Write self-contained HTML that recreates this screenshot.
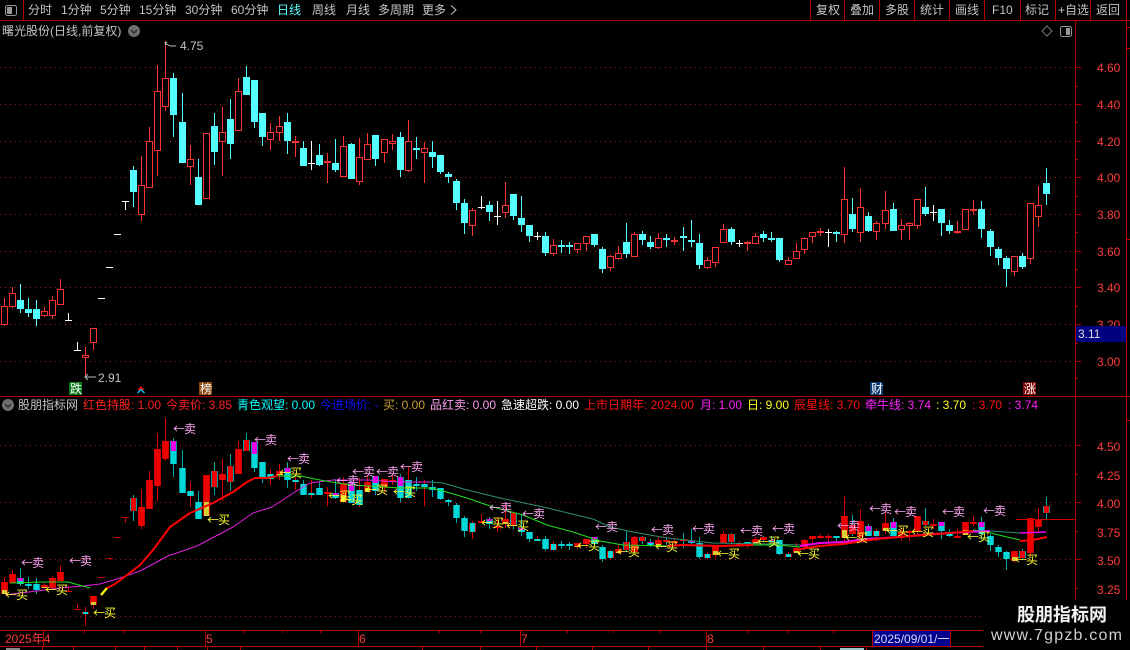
<!DOCTYPE html>
<html><head><meta charset="utf-8">
<style>
html,body{margin:0;padding:0;background:#000;width:1130px;height:650px;overflow:hidden}
svg{display:block;position:absolute;left:0;top:0}
text{font-family:"Liberation Sans","WenQuanYi Zen Hei","Noto Sans CJK SC",sans-serif;font-size:12px}
.t{fill:#c4c4c4}
.p{fill:#ff3c3c}
.s{fill:#ffa4f4;font-family:"WenQuanYi Zen Hei","Noto Sans CJK SC",sans-serif;letter-spacing:-1px}
.b{fill:#ffff33;font-family:"WenQuanYi Zen Hei","Noto Sans CJK SC",sans-serif;letter-spacing:-1px}
</style></head>
<body>
<svg width="1130" height="650" viewBox="0 0 1130 650" shape-rendering="crispEdges">
<g stroke="#a81818" stroke-dasharray="1 4" stroke-width="1">
<path d="M0 67.5H1075M0 104.5H1075M0 141.5H1075M0 177.5H1075M0 214.5H1075M0 251.5H1075M0 287.5H1075M0 324.5H1075M0 361.5H1075M0 445.5H1075M0 502.5H1075M0 559.5H1075M0 616.5H1075"/>
</g>
<g id="top"></g>
<g id="low"></g>
<g fill="none" shape-rendering="auto" stroke-linejoin="round">
<polyline stroke="#e020e0" points="5,595 20,593 37,591 60,588 83,586 100,584 117,579 140,571 168,556 197,546 233,527 253,513 272,507 298,490 310,483 333,480 367,480 400,482 430,482"/>
<polyline stroke="#2f8f6f" points="430,482 443,483 467,490 500,498 543,507 593,519 610,527 633,532 667,538 713,543 767,544 800,545"/>
<polyline stroke="#2f8f6f" points="990,531 1020,533"/>
<polyline stroke="#20e020" points="10,583 43,582 68,582 90,588"/>
<polyline stroke="#20e020" points="278,476 300,476 320,480 337,483 353,485 400,488 430,488 443,491 467,498 493,507 523,515 547,525 573,532 600,541 623,545 667,546"/>
<polyline stroke="#20e020" points="753,545 777,545 800,547"/>
<polyline stroke="#20e020" points="973,530 987,532 1007,537 1020,540"/>
<polyline stroke="#f000f0" stroke-width="2" points="800,546 820,543 843,542 867,539 900,537 933,534 967,532 990,531"/>
<polyline stroke="#f000f0" stroke-width="1.5" points="1020,533 1046,532"/>
<polyline stroke="#ff0000" stroke-width="2" points="667,546 683,545 720,546 753,545"/>
<polyline stroke="#ff0000" stroke-width="2" points="800,549 820,546 843,544 877,539 910,536 950,533 973,531"/>
<polyline stroke="#ff0000" stroke-width="2" points="1020,541 1033,540 1047,537"/>
<polyline stroke="#ff0000" stroke-width="2" points="107,588 115,584 127,575 140,565 153,550 170,527 190,513 213,503 233,492 247,482 255,478 267,478 278,476"/>
<polyline stroke="#ffee00" stroke-width="2.4" points="101,595 107,588"/>
</g>
<g fill="#b40000">
<rect x="0" y="20" width="1130" height="1"/>
<rect x="23" y="0" width="1" height="20"/>
<rect x="810" y="0" width="1" height="20"/><rect x="844" y="0" width="1" height="20"/><rect x="879" y="0" width="1" height="20"/><rect x="914" y="0" width="1" height="20"/><rect x="949" y="0" width="1" height="20"/><rect x="984" y="0" width="1" height="20"/><rect x="1020" y="0" width="1" height="20"/><rect x="1055" y="0" width="1" height="20"/><rect x="1090" y="0" width="1" height="20"/><rect x="1126" y="0" width="1" height="20"/>
<rect x="1075" y="20" width="1" height="610"/>
<rect x="1126" y="20" width="1" height="610"/>
<rect x="0" y="396" width="1130" height="1"/>
<rect x="0" y="630" width="1130" height="1"/>
<rect x="0" y="646" width="1130" height="1"/>
<rect x="1126" y="27" width="4" height="1"/><rect x="1126" y="48" width="4" height="1"/><rect x="1126" y="239" width="4" height="1"/><rect x="1126" y="420" width="4" height="1"/>
<rect x="43" y="630" width="1" height="16"/><rect x="205" y="630" width="1" height="16"/><rect x="358" y="630" width="1" height="16"/><rect x="520" y="630" width="1" height="16"/><rect x="706" y="630" width="1" height="16"/>
<rect x="84" y="630" width="1" height="3"/><rect x="124" y="630" width="1" height="3"/><rect x="243" y="630" width="1" height="3"/><rect x="282" y="630" width="1" height="3"/><rect x="320" y="630" width="1" height="3"/><rect x="439" y="630" width="1" height="3"/><rect x="480" y="630" width="1" height="3"/><rect x="567" y="630" width="1" height="3"/><rect x="613" y="630" width="1" height="3"/><rect x="660" y="630" width="1" height="3"/><rect x="748" y="630" width="1" height="3"/><rect x="788" y="630" width="1" height="3"/><rect x="833" y="630" width="1" height="3"/>
<rect x="42" y="646" width="1" height="4"/><rect x="73" y="646" width="1" height="4"/><rect x="115" y="646" width="1" height="4"/><rect x="144" y="646" width="1" height="4"/><rect x="177" y="646" width="1" height="4"/><rect x="207" y="646" width="1" height="4"/><rect x="240" y="646" width="1" height="4"/><rect x="422" y="646" width="1" height="4"/><rect x="480" y="646" width="1" height="4"/><rect x="536" y="646" width="1" height="4"/><rect x="592" y="646" width="1" height="4"/><rect x="648" y="646" width="1" height="4"/><rect x="706" y="646" width="1" height="4"/><rect x="763" y="646" width="1" height="4"/><rect x="820" y="646" width="1" height="4"/><rect x="866" y="646" width="1" height="4"/>
<path id="ticks" d=""/>
<rect x="872" y="631" width="78" height="15" fill="#00008c"/>
<rect x="872" y="630" width="1" height="16"/><rect x="950" y="630" width="1" height="16"/>
<rect x="1016" y="519" width="59" height="1" fill="#d00000"/>
<rect x="6" y="648" width="14" height="2" fill="#8a8a8a"/><rect x="840" y="648" width="24" height="2" fill="#9fc8c8"/>
</g>
<g shape-rendering="auto">
<rect x="5.5" y="5.500" width="11" height="10" rx="2" fill="none" stroke="#999"/><rect x="7" y="7" width="5" height="7" fill="#999"/>
<rect x="1060.5" y="26.5" width="11" height="10" rx="2" fill="none" stroke="#999"/><rect x="1066" y="28" width="4" height="7" fill="#999"/>
<path d="M1047 26l5 5-5 5-5-5z" fill="none" stroke="#777"/>
<path d="M451 5.500l5 4.500-5 4.500" fill="none" stroke="#c4c4c4"/>
<circle cx="134" cy="31" r="6" fill="#6e6e6e"/><path d="M131 30l3 3 3-3" fill="none" stroke="#222" stroke-width="1.2"/>
<circle cx="8" cy="405" r="6" fill="#6e6e6e"/><path d="M5 404l3 3 3-3" fill="none" stroke="#222" stroke-width="1.2"/>
<path d="M165 43l5 3h6M167 42l-2 1 1 2" fill="none" stroke="#bbb"/>
<path d="M85 377h11M88 374l-3 3 3 3" fill="none" stroke="#bbb"/>
<path d="M141 386l4 4h-8z" fill="#e00000"/><path d="M137.500 393l3.500-3.500 3.500 3.500" fill="none" stroke="#00b8f0" stroke-width="1.4"/>
</g>
<rect x="69" y="382" width="13" height="13" fill="#0a7a1a"/>
<rect x="199" y="382" width="13" height="13" fill="#8a4a10"/>
<rect x="870" y="382" width="13" height="13" fill="#0a3a6e"/>
<rect x="1023" y="382" width="13" height="13" fill="#800808"/>
<rect x="983" y="600" width="147" height="50" fill="#000"/>
<g id="labels" shape-rendering="auto">
<text class="t" x="28" y="14">分时</text><text class="t" x="61" y="14">1分钟</text><text class="t" x="100" y="14">5分钟</text><text class="t" x="139" y="14">15分钟</text><text class="t" x="185" y="14">30分钟</text><text class="t" x="231" y="14">60分钟</text><text x="277" y="14" fill="#55ffff">日线</text><text class="t" x="312" y="14">周线</text><text class="t" x="346" y="14">月线</text><text class="t" x="378" y="14">多周期</text><text class="t" x="422" y="14">更多</text>
<text class="t" x="816" y="14">复权</text><text class="t" x="850" y="14">叠加</text><text class="t" x="885" y="14">多股</text><text class="t" x="920" y="14">统计</text><text class="t" x="955" y="14">画线</text><text class="t" x="992" y="14">F10</text><text class="t" x="1025" y="14">标记</text><text class="t" x="1058" y="14">+自选</text><text class="t" x="1096" y="14">返回</text>
<text class="t" x="2" y="35">曙光股份(日线,前复权)</text>
<text class="t" x="180" y="50">4.75</text><text class="t" x="98" y="382">2.91</text>
<text x="70" y="393" fill="#fff">跌</text><text x="200" y="393" fill="#fff">榜</text><text x="871" y="393" fill="#fff">财</text><text x="1024" y="393" fill="#fff">涨</text>
<text class="p" x="1097" y="72">4.60</text><text class="p" x="1097" y="109">4.40</text><text class="p" x="1097" y="146">4.20</text><text class="p" x="1097" y="182">4.00</text><text class="p" x="1097" y="219">3.80</text><text class="p" x="1097" y="256">3.60</text><text class="p" x="1097" y="292">3.40</text><text class="p" x="1097" y="329">3.20</text><text class="p" x="1097" y="366">3.00</text>
<rect x="1076" y="326" width="50" height="16" fill="#000080"/>
<text x="1078" y="338" fill="#e0e0e0">3.11</text>
<text class="p" x="1097" y="451">4.50</text><text class="p" x="1097" y="480">4.25</text><text class="p" x="1097" y="508">4.00</text><text class="p" x="1097" y="537">3.75</text><text class="p" x="1097" y="565">3.50</text><text class="p" x="1097" y="594">3.25</text>
<text class="t" x="18" y="409">股朋指标网</text>
<text x="83" y="409" fill="#ff2020">红色持股: 1.00</text>
<text x="166" y="409" fill="#ff2020">今卖价: 3.85</text>
<text x="237" y="409" fill="#00ffff">青色观望: 0.00</text>
<text x="320" y="409" fill="#1010ff">今进场价: -</text>
<text x="383" y="409" fill="#c8a030">买: 0.00</text>
<text x="430" y="409" fill="#ff9ff0">品红卖: 0.00</text>
<text x="501" y="409" fill="#ffffff">急速超跌: 0.00</text>
<text x="584" y="409" fill="#ff1010">上市日期年: 2024.00</text>
<text x="700" y="409" fill="#ff20ff">月: 1.00</text>
<text x="747" y="409" fill="#ffff20">日: 9.00</text>
<text x="794" y="409" fill="#ff1010">辰星线: 3.70</text>
<text x="865" y="409" fill="#ff20ff">牵牛线: 3.74</text>
<text x="936" y="409" fill="#ffff20">: 3.70</text>
<text x="972" y="409" fill="#ff1010">: 3.70</text>
<text x="1008" y="409" fill="#ff20ff">: 3.74</text>
<g>
<text class="s" x="21" y="567">←卖</text><text class="s" x="69" y="565">←卖</text><text class="s" x="173" y="433">←卖</text><text class="s" x="254" y="444">←卖</text><text class="s" x="287" y="463">←卖</text><text class="s" x="336" y="485">←卖</text><text class="s" x="352" y="476">←卖</text><text class="s" x="376" y="476">←卖</text><text class="s" x="400" y="471">←卖</text><text class="s" x="489" y="512">←卖</text><text class="s" x="522" y="518">←卖</text><text class="s" x="595" y="531">←卖</text><text class="s" x="651" y="534">←卖</text><text class="s" x="692" y="533">←卖</text><text class="s" x="740" y="535">←卖</text><text class="s" x="772" y="533">←卖</text><text class="s" x="837" y="530">←卖</text><text class="s" x="869" y="513">←卖</text><text class="s" x="894" y="516">←卖</text><text class="s" x="942" y="516">←卖</text><text class="s" x="983" y="515">←卖</text>
</g>
<g>
<text class="b" x="5" y="599">←买</text><text class="b" x="45" y="594">←买</text><text class="b" x="93" y="617">←买</text><text class="b" x="207" y="524">←买</text><text class="b" x="279" y="477">←买</text><text class="b" x="328" y="500">←买</text><text class="b" x="340" y="504">←买</text><text class="b" x="365" y="494">←买</text><text class="b" x="393" y="496">←买</text><text class="b" x="481" y="527">←买</text><text class="b" x="506" y="530">←买</text><text class="b" x="577" y="550">←买</text><text class="b" x="617" y="556">←买</text><text class="b" x="655" y="551">←买</text><text class="b" x="717" y="558">←买</text><text class="b" x="757" y="546">←买</text><text class="b" x="797" y="558">←买</text><text class="b" x="845" y="542">←买</text><text class="b" x="886" y="535">←买</text><text class="b" x="911" y="536">←买</text><text class="b" x="967" y="541">←买</text><text class="b" x="1015" y="564">←买</text>
</g>
<text x="5" y="643" fill="#ff3c3c">2025年4</text>
<text x="206" y="643" fill="#ff3c3c">5</text><text x="359" y="643" fill="#ff3c3c">6</text><text x="521" y="643" fill="#ff3c3c">7</text><text x="707" y="643" fill="#ff3c3c">8</text>
<text x="874" y="643" fill="#d8d8ff">2025/09/01/一</text>
<text x="1017" y="621" fill="#f2f2f2" style="font-size:18px;font-weight:bold;font-family:'Liberation Sans','Noto Sans CJK SC',sans-serif">股朋指标网</text>
<text x="991" y="640" fill="#cfcfcf" style="font-size:16px;letter-spacing:1.2px">www.7gpzb.com</text>
</g>
</svg>
<script>
var D=[
"r,298,306,325,326","r,287,293,307,308","c,284,300,309,313","c,298,309,313,317","c,300,309,319,326","r,307,311,316,317","r,296,300,316,319","r,279,289,305,305","w,313,320,320,320","w,342,350,350,350",
"r,347,355,358,377","r,328,328,343,350","w,298,298,298,298","w,267,267,267,267","w,234,234,234,234","w,201,201,201,210","c,166,170,192,207","r,156,185,215,221","r,127,141,188,188","r,65,91,151,176",
"r,41,78,107,111","c,73,78,115,137","c,93,122,163,163","r,145,159,167,185","c,159,177,205,205","r,133,133,199,199","c,113,126,152,165","r,107,132,142,176","c,99,119,144,159","r,78,91,131,131",
"c,66,77,95,95","c,80,80,122,128","c,113,113,137,146","r,123,132,140,150","r,116,126,133,141","c,113,122,141,154","r,136,141,143,157","c,141,148,166,166","w,141,163,163,170","c,144,155,165,166",
"r,153,161,163,183","c,139,163,170,172","r,136,146,177,177","c,143,144,179,179","r,138,157,182,185","r,133,144,160,160","c,135,135,159,166","r,139,139,153,163","r,134,141,144,150","c,132,137,170,177",
"r,120,141,171,172","c,137,148,150,159","r,142,148,153,183","c,141,152,157,168","c,155,155,172,174","c,172,174,177,183","c,179,181,203,210","c,199,203,223,234","r,208,210,226,236","w,196,207,207,209",
"c,201,205,212,221","w,201,216,216,225","r,182,205,213,218","c,194,194,216,220","c,196,218,225,232","c,225,225,236,242","w,232,236,236,240","c,232,236,253,256","r,239,245,254,256","c,240,245,247,253",
"c,242,245,247,254","r,243,243,250,253","r,236,236,244,251","c,234,234,245,247","c,247,249,269,273","r,255,256,268,271","r,246,253,259,260","c,223,242,254,258","r,232,234,257,257","c,231,234,240,245",
"c,236,242,247,249","r,233,238,248,249","c,234,238,240,247","r,237,240,242,245","c,227,236,238,251","c,220,240,242,247","c,234,243,265,269","r,257,260,268,269","r,247,247,263,267","r,224,229,243,243",
"c,227,229,242,245","w,240,243,243,247","r,241,242,244,251","r,233,236,244,244","c,231,234,238,242","c,232,238,240,242","c,238,238,260,262","r,257,260,265,265","r,243,251,259,259","r,237,238,250,254",
"r,232,232,237,243","r,228,231,233,236","w,229,232,232,247","c,231,232,234,242","r,167,199,235,243","c,198,214,229,232","r,188,207,233,242","c,212,216,231,232","r,221,223,232,240","r,191,210,224,229",
"c,203,209,231,231","r,219,225,230,240","r,222,223,226,240","r,199,199,226,229","c,187,207,214,216","w,205,212,212,221","c,209,209,223,236","c,220,225,231,234","r,221,231,233,234","r,209,209,230,230",
"r,200,209,211,215","c,201,209,229,238","c,229,231,247,256","c,247,249,258,265","c,256,258,269,287","r,256,256,272,276","c,253,256,267,269","r,203,203,259,264","r,186,205,217,227","c,168,183,194,205"
];
var S="YRMCCYRRDD"+"FYDDDDERRR"+"RMCCCYERER"+"EMCCYMCCCC"+"RMYMCYMRRM"+"CCCCCCCCFR"+"MRYEMCCCFC"+"CYRMCFYERE"+"MYRRRMCFYR"+"ERCYRMCFYR"+"RRRCYRRMFY"+"MRRRERMCRY"+"RMCCCYERRE";
function X(i){return Math.floor(4.3+8.08*i)+.5}
function Lw(y){return Math.round(502.3+(y-177.3)*0.6196)}
var top_="",low_="";
function R(x,y,w,h,f){return '<rect x="'+x+'" y="'+y+'" width="'+w+'" height="'+h+'" fill="'+f+'"/>'}
function V(x,a,b,c){return b>a?R(x-.5,a,1,b-a,c):""}
for(var i=0;i<D.length;i++){
 var d=D[i].split(","),t=d[0],h=+d[1],a=+d[2],b=+d[3],l=+d[4],x=X(i),c;
 if(t=="c"){
  c="#54ffff";
  top_+=V(x,h,l,c)+R(x-3.5,a,7,Math.max(b-a,2),c);
 }else if(t=="r"){
  c="#ff3232";
  top_+=V(x,h,a,c)+V(x,b,l,c);
  top_+='<rect x="'+(x-3)+'" y="'+(a+.5)+'" width="6" height="'+Math.max(b-a-1,1)+'" fill="#000" stroke="'+c+'"/>';
 }else{
  c="#ffffff";
  top_+=V(x,h,l,c)+R(x-3.5,a,7,1,c);
 }
 var H=Lw(h),A=Lw(a),B=Lw(b),L=Lw(l),s=S.charAt(i);
 var wc=t=="c"?"#00a8a8":"#d80000";
 if(B-A<2)B=A+2;
 low_+=V(x,H,L,wc);
 var ry="#ee0000",cy="#00d8d8",tl="#009a9a",dr="#c80000";
 if(s=="D"){low_+=R(x-3.5,A,7,1,"#d00000");continue}
 if(s=="R"){low_+=R(x-3.5,A,7,B-A,dr)+R(x-2.5,A,5,B-A,ry)}
 else if(s=="E"){low_+=R(x-3.5,A,7,B-A,tl)+R(x-2.5,A,5,B-A,ry)}
 else if(s=="C"){low_+=R(x-3.5,A,7,B-A,tl)+R(x-2.5,A,5,B-A,cy)}
 else if(s=="F"){low_+=R(x-3.5,A,7,B-A,"#d80000")+R(x-2.5,A,5,B-A,cy)}
 else if(s=="M"){var m=A+Math.max(1,Math.round((B-A)*.45));low_+=R(x-3.5,A,7,B-A,tl)+R(x-2.5,A,5,B-A,cy)+R(x-2.5,A,5,m-A,"#e800e8")}
 else if(s=="Y"){var m=B-Math.max(1,Math.round((B-A)*.35));low_+=R(x-3.5,A,7,B-A,dr)+R(x-2.5,A,5,B-A,ry)+R(x-2.5,m,5,B-m,"#d8d030")}
}
document.getElementById("top").innerHTML=top_;
document.getElementById("low").innerHTML=low_;
var tk="";
[67,104,141,177,214,251,287,324,361,445,502,559].forEach(function(y){tk+="M1075 "+y+"h6v1h-6z"});
[86,122,159,196,232,269,306,343,378,474,531,588].forEach(function(y){tk+="M1075 "+y+"h3v1h-3z"});
document.getElementById("ticks").setAttribute("d",tk);
</script>
</body></html>
